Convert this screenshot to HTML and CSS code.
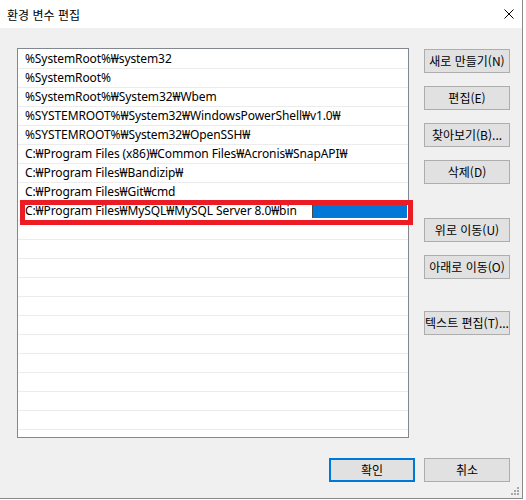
FILE: index.html
```html
<!DOCTYPE html>
<html lang="ko">
<head>
<meta charset="utf-8">
<title>환경 변수 편집</title>
<link rel="stylesheet" href="styles.css">
</head>
<body>
<div class="window">
  <div class="titlebar">
    <span class="title">환경 변수 편집</span>
    <svg class="close" width="10" height="10" viewBox="0 0 10 10"><path d="M0.5 0.5 L9.5 9.5 M9.5 0.5 L0.5 9.5" stroke="#000" stroke-width="1" fill="none"/></svg>
  </div>
  <div class="body">
    <div class="list-wrap">
      <div class="list">
        <div class="row">%SystemRoot%₩system32</div>
        <div class="row">%SystemRoot%</div>
        <div class="row">%SystemRoot%₩System32₩Wbem</div>
        <div class="row">%SYSTEMROOT%₩System32₩WindowsPowerShell₩v1.0₩</div>
        <div class="row">%SYSTEMROOT%₩System32₩OpenSSH₩</div>
        <div class="row">C:₩Program Files (x86)₩Common Files₩Acronis₩SnapAPI₩</div>
        <div class="row">C:₩Program Files₩Bandizip₩</div>
        <div class="row">C:₩Program Files₩Git₩cmd</div>
        <div class="row editing">
          <span>C:₩Program Files₩MySQL₩MySQL Server 8.0₩bin</span>
          <span class="sel"></span>
        </div>
        <div class="row"></div><div class="row"></div><div class="row"></div>
        <div class="row"></div><div class="row"></div><div class="row"></div>
        <div class="row"></div><div class="row"></div><div class="row"></div>
        <div class="row"></div><div class="row"></div><div class="row"></div>
      </div>
      <div class="mark"></div>
    </div>
    <div class="side">
      <button class="btn">새로 만들기(N)</button>
      <button class="btn">편집(E)</button>
      <button class="btn">찾아보기(B)...</button>
      <button class="btn">삭제(D)</button>
      <button class="btn gap-l">위로 이동(U)</button>
      <button class="btn">아래로 이동(O)</button>
      <button class="btn gap-m">텍스트 편집(T)...</button>
    </div>
  </div>
  <div class="footer">
    <button class="btn default">확인</button>
    <button class="btn">취소</button>
  </div>
  <svg class="grip" width="8" height="8" viewBox="0 0 8 8">
    <rect x="6" y="0" width="2" height="2" fill="#a8a8a8"/>
    <rect x="3" y="3" width="2" height="2" fill="#a8a8a8"/>
    <rect x="6" y="3" width="2" height="2" fill="#a8a8a8"/>
    <rect x="0" y="6" width="2" height="2" fill="#a8a8a8"/>
    <rect x="3" y="6" width="2" height="2" fill="#a8a8a8"/>
    <rect x="6" y="6" width="2" height="2" fill="#a8a8a8"/>
  </svg>
</div>
</body>
</html>
```

FILE: styles.css
```css
* { box-sizing: border-box; }
html, body { margin: 0; padding: 0; background: #fff; }
body { font-family: "Noto Sans", "Noto Sans CJK KR", sans-serif; font-size: 12px; color: #000; }

.window {
  position: relative;
  width: 523px;
  height: 499px;
  background: #f0f0f0;
  border-right: 1px solid #8a8a8a;
  border-bottom: 1px solid #8a8a8a;
  display: flex;
  flex-direction: column;
}

.titlebar {
  height: 28px;
  background: #fff;
  display: flex;
  align-items: center;
  justify-content: space-between;
  padding: 0 8px 0 7px;
}
.title { font-family: "Noto Sans CJK KR", sans-serif; font-size: 12px; line-height: 14px; margin-top: 1px; }
.close { display: block; }

.body {
  display: flex;
  gap: 15px;
  padding: 20px 0 0 17px;
}

.list-wrap { position: relative; flex: none; }
.list {
  width: 392px;
  height: 390px;
  background: #fff;
  border: 1px solid #828790;
  padding-top: 1px;
  overflow: hidden;
}
.row {
  height: 19px;
  border-bottom: 1px solid #ececec;
  padding-left: 7px;
  line-height: 18px;
  letter-spacing: -0.1px;
  white-space: nowrap;
  display: flex;
  align-items: center;
}
.sel {
  margin-left: auto;
  margin-right: 1px;
  width: 95px;
  height: 14px;
  background: #0078d7;
  border-left: 1px solid #4a4a4a;
}
.mark {
  position: absolute;
  left: 3px;
  top: 152px;
  width: 393px;
  height: 25px;
  border: 5px solid #ed1c24;
  pointer-events: none;
}

.side {
  display: flex;
  flex-direction: column;
  gap: 13px;
  padding-top: 1px;
}
.btn {
  width: 86px;
  height: 24px;
  padding: 0;
  margin: 0;
  background: #e1e1e1;
  border: 1px solid #adadad;
  font-family: "Noto Sans CJK KR", sans-serif;
  font-size: 12px;
  line-height: 14px;
  color: #000;
  display: flex;
  align-items: center;
  justify-content: center;
  white-space: nowrap;
}
.gap-l { margin-top: 21px; }
.gap-m { margin-top: 19px; }

.footer {
  display: flex;
  justify-content: flex-end;
  gap: 9px;
  padding: 20px 12px 0 0;
}
.btn.default { border: 2px solid #0078d7; }

.grip { position: absolute; right: 3px; bottom: 3px; }
```
